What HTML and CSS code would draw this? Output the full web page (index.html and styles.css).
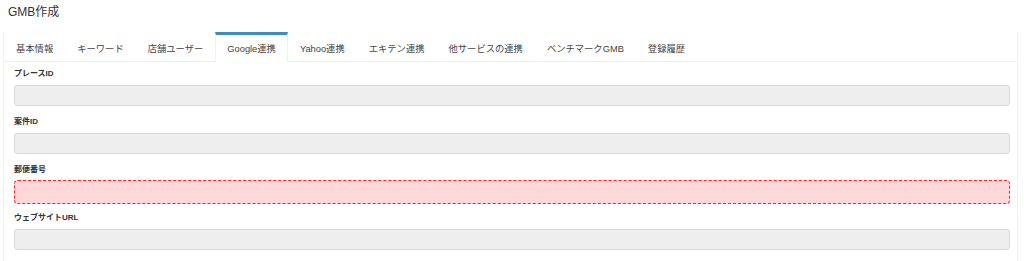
FILE: index.html
```html
<!DOCTYPE html>
<html lang="ja">
<head>
    <meta charset="UTF-8">
    <title>GMB作成</title>
    <link rel="stylesheet" href="styles.css">
</head>
<body>
    <h1 class="page-title">GMB作成</h1>

    <div class="tabs-box">
        <ul class="tabs">
            <li class="tab">基本情報</li>
            <li class="tab">キーワード</li>
            <li class="tab">店舗ユーザー</li>
            <li class="tab active">Google連携</li>
            <li class="tab">Yahoo連携</li>
            <li class="tab">エキテン連携</li>
            <li class="tab">他サービスの連携</li>
            <li class="tab">ベンチマークGMB</li>
            <li class="tab">登録履歴</li>
        </ul>

        <div class="tab-body">
            <div class="field">
                <label>プレースID</label>
                <input class="input" type="text" disabled>
            </div>
            <div class="field">
                <label>案件ID</label>
                <input class="input" type="text" disabled>
            </div>
            <div class="field">
                <label>郵便番号</label>
                <input class="input invalid" type="text">
            </div>
            <div class="field">
                <label>ウェブサイトURL</label>
                <input class="input" type="text" disabled>
            </div>
        </div>
    </div>
</body>
</html>
```

FILE: styles.css
```css
body {
    margin: 0;
    font-family: "Liberation Sans", "Noto Sans CJK JP", sans-serif;
    color: #333;
    background: #fff;
}
.page-title {
    margin: 0;
    padding: 4px 8px 0;
    height: 28px;
    box-sizing: border-box;
    font-size: 12px;
    font-weight: normal;
    line-height: 16px;
    color: #333;
}
.tabs-box {
    margin: 4px 6px 0 3px;
    border-left: 1px solid #f2f2f2;
    border-right: 1px solid #f2f2f2;
}
.tabs {
    display: flex;
    margin: 0;
    padding: 0;
    list-style: none;
    border-bottom: 1px solid #f0f0f0;
}
.tab {
    padding: 0 12px;
    height: 30px;
    line-height: 28px;
    font-size: 9.3px;
    color: #444;
    border-top: 3px solid transparent;
    box-sizing: border-box;
    margin-bottom: -1px;
}
.tab.active {
    border-top-color: #3c8dbc;
    border-left: 1px solid #f0f0f0;
    border-right: 1px solid #f0f0f0;
    background: #fff;
    padding: 0 11px;
}
.tab-body {
    padding: 6px 7px 4px 10px;
}
.field {
    margin-bottom: 10px;
}
.field label {
    display: block;
    font-size: 8px;
    font-weight: bold;
    line-height: 12px;
    margin-bottom: 5px;
    color: #333;
}
.input {
    display: block;
    width: 100%;
    height: 21px;
    box-sizing: border-box;
    border: 1px solid #d8d8d8;
    border-radius: 3px;
    background: #eee;
    margin: 0;
}
.input.invalid {
    height: 24px;
    margin: -1px 0 -2px;
    background: #ffd9d9;
    border: 1px dashed #f22;
    border-radius: 4px;
}
```
